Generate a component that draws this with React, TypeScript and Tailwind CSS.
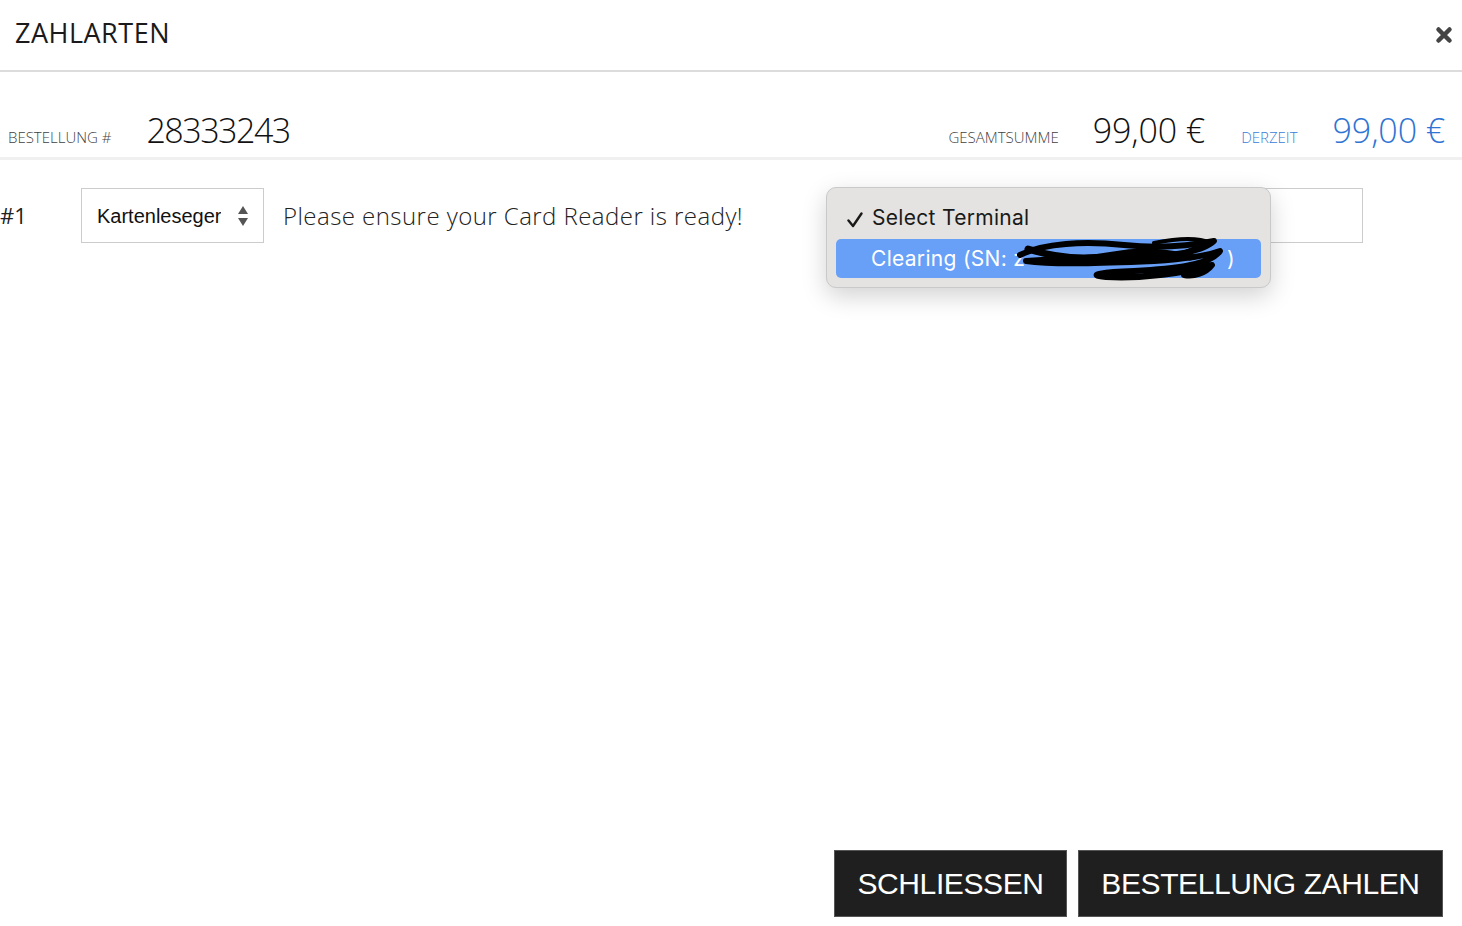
import React from "react";

function Scribble() {
  return (
    <svg width="214" height="46" viewBox="0 0 214 46" className="absolute left-[178px] top-[-4px]" fill="none">
      <path
        d="M6 20 C30 8 70 6 110 10 C150 14 180 10 200 6 C190 16 160 22 120 22 C80 22 40 24 12 26 C40 30 90 28 140 26 C170 24 195 20 206 16 C196 30 160 34 120 36 C90 37 70 40 92 42 C130 44 170 38 198 30 C192 38 180 42 170 40"
        stroke="#000"
        strokeWidth="6"
        strokeLinecap="round"
        strokeLinejoin="round"
      />
      <path d="M14 14 C40 22 70 26 100 20 C130 14 150 18 176 22" stroke="#000" strokeWidth="7" strokeLinecap="round" />
      <path d="M140 8 C160 4 184 2 196 8 C186 12 174 14 166 20" stroke="#000" strokeWidth="4" strokeLinecap="round" />
    </svg>
  );
}

export default function App() {
  return (
    <div className="relative flex h-[926px] w-[1462px] flex-col bg-white font-['Open_Sans',sans-serif] text-[#111]">
      <div className="flex h-[72px] items-center justify-between border-b-2 border-[#dcdcdc] pb-[6px] pl-[15px] pr-[9px]">
        <h1 className="text-[27px] leading-none tracking-[0.5px] text-[#1a1a1a]">ZAHLARTEN</h1>
        <svg width="18" height="18" viewBox="0 0 18 18" className="mt-[6px]">
          <path d="M3.5 3.5 L14.5 14.5 M14.5 3.5 L3.5 14.5" stroke="#444" strokeWidth="4.5" strokeLinecap="round" />
        </svg>
      </div>

      <div className="flex h-[88px] items-end border-b-[3px] border-[#f0f0f0] pb-[1px] pl-[8px] pr-[17px]">
        <div className="flex items-baseline">
          <span className="text-[15px] font-light text-[#3f3f3f]">BESTELLUNG #</span>
          <span className="ml-[35px] text-[34px] font-light tracking-[-1.5px] text-[#111]">28333243</span>
        </div>
        <div className="ml-auto flex items-baseline">
          <span className="text-[15px] font-light text-[#3f3f3f]">GESAMTSUMME</span>
          <span className="ml-[34px] text-[34px] font-light tracking-[-0.1px] text-[#111]">99,00 €</span>
          <span className="ml-[36px] text-[15px] font-light text-[#3b7dd8]">DERZEIT</span>
          <span className="ml-[35px] text-[34px] font-light tracking-[-0.1px] text-[#2f74d3]">99,00 €</span>
        </div>
      </div>

      <div className="relative mt-[28px] flex h-[55px] items-center">
        <span className="w-[81px] text-[22px] text-[#222]">#1</span>
        <div className="flex h-[55px] w-[183px] items-center border border-[#ccc] pl-[15px] pr-[14px] font-['Liberation_Sans',sans-serif] text-[20px] text-[#111]">
          <span className="w-[124px] overflow-hidden whitespace-nowrap">Kartenlesegerät</span>
          <svg width="12" height="22" viewBox="0 0 12 22" className="ml-auto">
            <path d="M6 1 L11 9 L1 9 Z M6 21 L11 13 L1 13 Z" fill="#555" />
          </svg>
        </div>
        <span className="ml-[19px] text-[24px] font-light tracking-[0.45px] text-[#222]">Please ensure your Card Reader is ready!</span>
        <div className="ml-auto mr-[99px] h-[55px] w-[480px] border border-[#ccc]" />

        <div className="absolute left-[826px] top-[-1px] h-[101px] w-[445px] rounded-[10px] border border-[#c9c9c9] bg-[#e4e3e1] px-[9px] pt-[14px] font-['Inter',sans-serif] shadow-[0_8px_24px_rgba(0,0,0,0.18)]">
          <div className="flex h-[32px] items-center pl-[11px] text-[21px] tracking-[0.3px] text-[#1a1a1a]">
            <svg width="16" height="16" viewBox="0 0 16 16" className="mr-[9px] mt-[3px]">
              <path d="M1.5 8.5 L6 14 L14.5 1.5" stroke="#1a1a1a" strokeWidth="2.4" fill="none" strokeLinecap="round" strokeLinejoin="round" />
            </svg>
            <span>Select Terminal</span>
          </div>
          <div className="relative mt-[5px] flex h-[39px] items-center rounded-[5px] bg-[#68a0f8] pl-[35px] text-[21px] tracking-[0.3px] text-white">
            <span>Clearing (SN: z</span>
            <span className="absolute left-[391px]">)</span>
            <Scribble />
          </div>
        </div>
      </div>

      <div className="mt-auto flex justify-end gap-[11px] pb-[9px] pr-[19px] font-['Liberation_Sans',sans-serif]">
        <button className="flex h-[67px] w-[233px] items-center justify-center border border-[#555] bg-[#1f1f1f] text-[30px] tracking-[-0.4px] text-white">
          SCHLIESSEN
        </button>
        <button className="flex h-[67px] w-[365px] items-center justify-center border border-[#555] bg-[#1f1f1f] text-[30px] tracking-[-0.4px] text-white">
          BESTELLUNG ZAHLEN
        </button>
      </div>
    </div>
  );
}
